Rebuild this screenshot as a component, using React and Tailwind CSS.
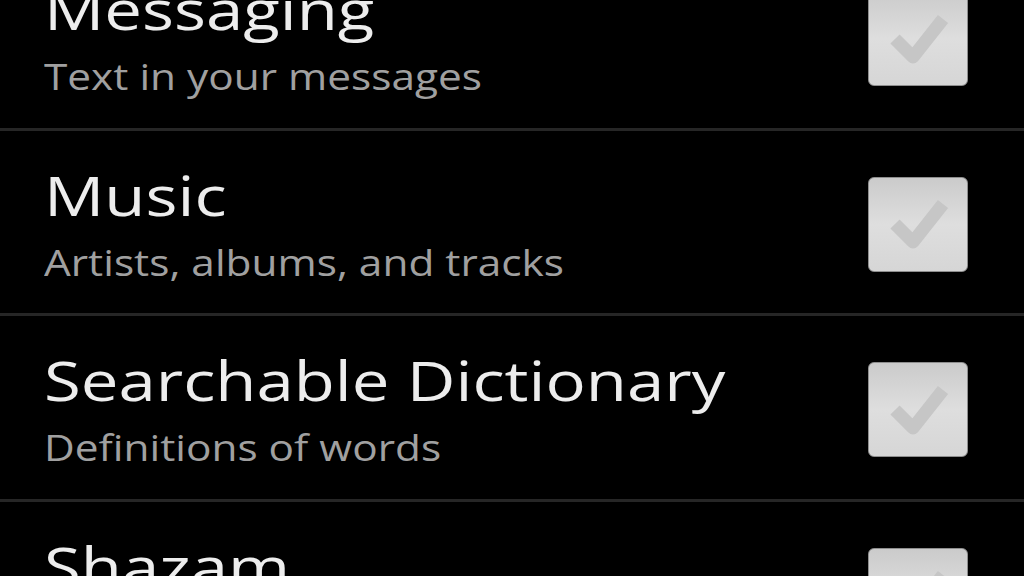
import React from "react";

const items = [
  { title: "Messaging", sub: "Text in your messages" },
  { title: "Music", sub: "Artists, albums, and tracks" },
  { title: "Searchable Dictionary", sub: "Definitions of words" },
  { title: "Shazam", sub: "Songs and artists" },
];

function Check() {
  return (
    <div className="mt-[5px] w-[100px] h-[95px] rounded-[6px] bg-gradient-to-b from-[#cbcbcb] via-[#dedede] to-[#d6d6d6] border border-[#8e8e8e] flex items-center justify-center">
      <svg width="70" height="60" viewBox="0 0 70 60">
        <path d="M12 30 L30 48 L60 10" fill="none" stroke="#c6c6c6" strokeWidth="13" strokeLinejoin="round" />
      </svg>
    </div>
  );
}

export default function App() {
  return (
    <div className="w-[1024px] h-[576px] bg-black overflow-hidden" style={{ fontFamily: '"Open Sans", "DejaVu Sans", sans-serif' }}>
      <div className="flex flex-col mt-[-55px]">
        {items.map((it) => (
          <div key={it.title} className="h-[185.5px] shrink-0 flex items-center justify-between pl-[44px] pr-[56px] border-b-[3px] border-[#262626]">
            <div className="flex flex-col pt-[2px]">
              <div className="text-[55px] leading-[66px] text-[#ededed] scale-x-[1.22] origin-left whitespace-nowrap">{it.title}</div>
              <div className="text-[37px] leading-[44px] mt-[12px] text-[#a0a0a0] scale-x-[1.145] origin-left whitespace-nowrap">{it.sub}</div>
            </div>
            <Check />
          </div>
        ))}
      </div>
    </div>
  );
}
